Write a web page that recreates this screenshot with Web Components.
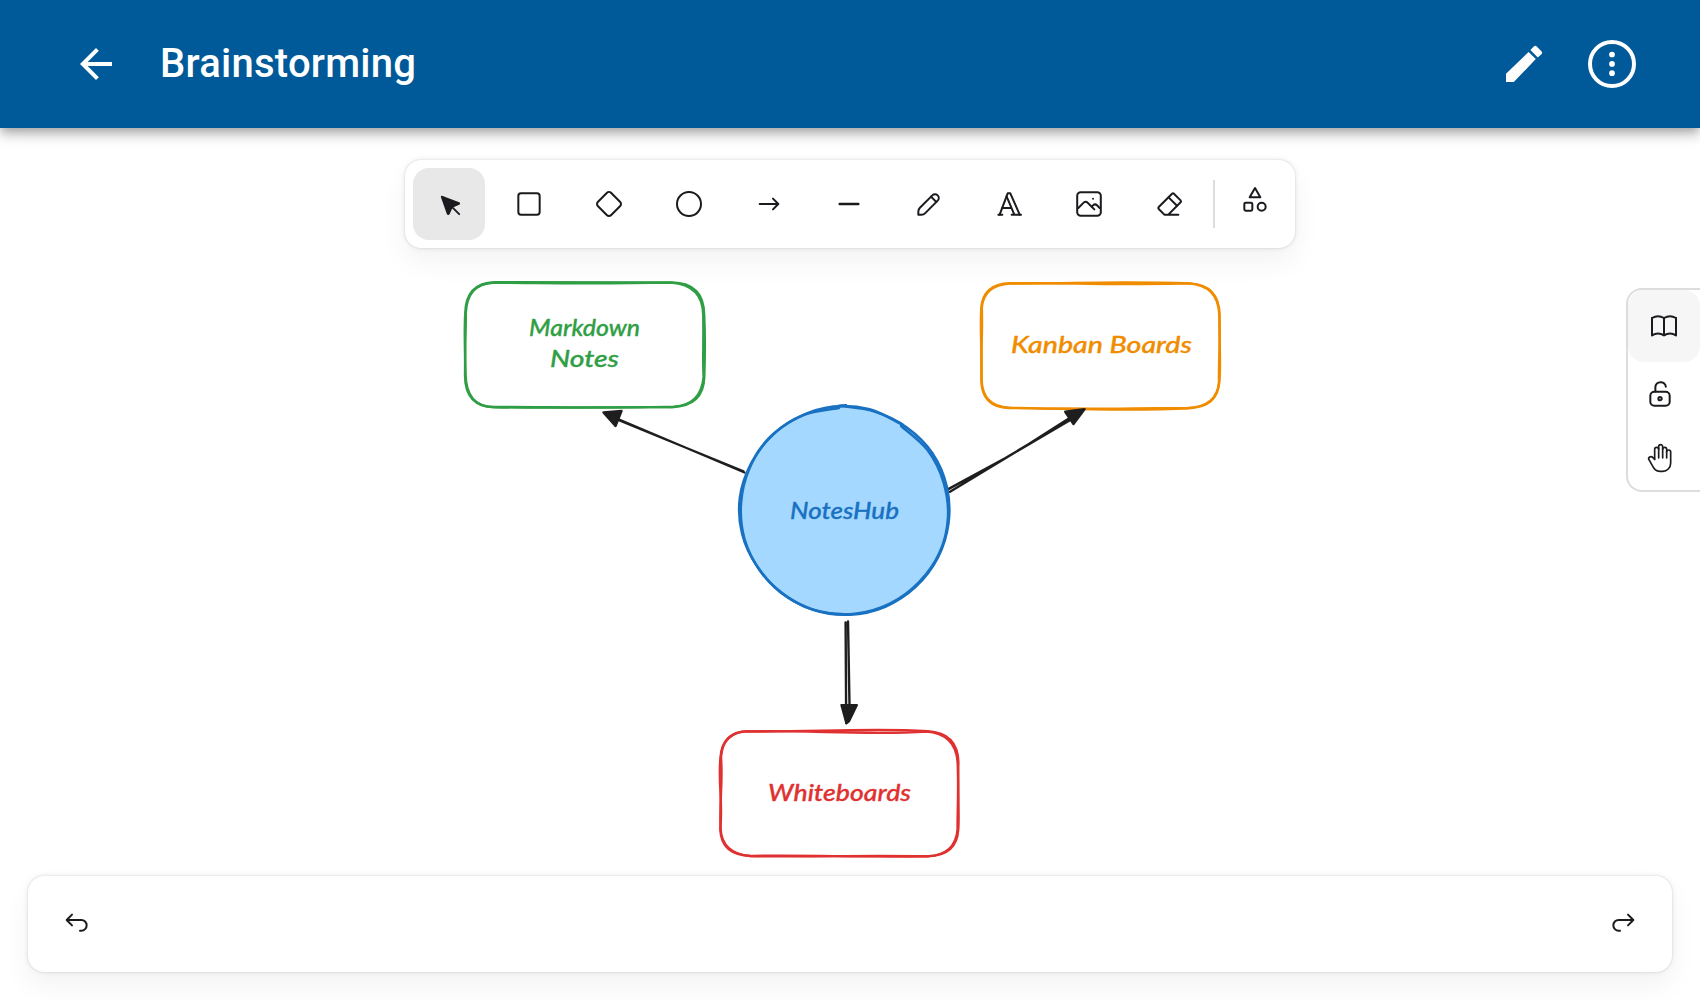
<!DOCTYPE html>
<html lang="en">
<head>
<meta charset="utf-8">
<title>Brainstorming</title>
<style>
html,body{margin:0;height:100%;background:#fff;overflow:hidden;font-family:Roboto,sans-serif;color:#1b1b1f}
</style>
</head>
<body>
<whiteboard-app></whiteboard-app>
<script>
const TABLER = (w, body) => ({ box: 24, w, body });
const SMALL = (w, body) => ({ box: 20, w, body });
const ICONS = {
  select: { box: 22, w: 1.25, body: '<path fill="currentColor" d="M6 6l4.153 11.793a.365.365 0 0 0 .331.207a.366.366 0 0 0 .332-.207l2.184-4.793l4.787-1.994a.355.355 0 0 0 .213-.323a.355.355 0 0 0-.213-.323l-11.787-4.36z"/><path d="M13.5 13.5l4.5 4.5"/>' },
  rectangle: TABLER(1.5, '<rect x="4" y="4" width="16" height="16" rx="2"/>'),
  diamond: TABLER(1.5, '<path d="M10.5 20.4l-6.9-6.9c-.781-.781-.781-2.219 0-3l6.9-6.9c.781-.781 2.219-.781 3 0l6.9 6.9c.781.781.781 2.219 0 3l-6.9 6.9c-.781.781-2.219.781-3 0z"/>'),
  ellipse: TABLER(1.5, '<circle cx="12" cy="12" r="9"/>'),
  arrow: TABLER(1.5, '<path d="M5 12h14M15 16l4-4M15 8l4 4"/>'),
  line: SMALL(1.5, '<path d="M4.167 10h11.666"/>'),
  draw: SMALL(1.25, '<path d="m7.643 15.69 7.774-7.773a2.357 2.357 0 1 0-3.334-3.334L4.31 12.357a3.333 3.333 0 0 0-.977 2.357v1.953h1.953c.884 0 1.732-.352 2.357-.977Z"/><path d="m11.25 5.417 3.333 3.333"/>'),
  text: TABLER(1.5, '<path d="M4 20h3M14 20h7M6.9 15h6.9M10.2 6.3 16 20"/><path d="M5 20 11 4h2l7 16"/>'),
  image: SMALL(1.25, '<path d="M12.5 6.667h.01"/><path d="M4.91 2.625h10.18a2.284 2.284 0 0 1 2.285 2.284v10.182a2.284 2.284 0 0 1-2.284 2.284H4.909a2.284 2.284 0 0 1-2.284-2.284V4.909a2.284 2.284 0 0 1 2.284-2.284Z"/><path d="m3.333 12.5 3.334-3.333c.773-.745 1.726-.745 2.5 0l4.166 4.166"/><path d="m11.667 11.667.833-.834c.774-.744 1.726-.744 2.5 0l1.667 1.667"/>'),
  eraser: TABLER(1.5, '<path d="M19 20h-10.5l-4.21-4.3a1 1 0 0 1 0-1.41l10-10a1 1 0 0 1 1.41 0l5 5a1 1 0 0 1 0 1.41l-9.2 9.3"/><path d="M18 13.3l-6.3-6.3"/>'),
  shapes: TABLER(1.5, '<path d="M12 3l-4 7h8z"/><circle cx="17" cy="17" r="3"/><rect x="4" y="14" width="6" height="6" rx="1"/>'),
  book: TABLER(1.5, '<path d="M3 19a9 9 0 0 1 9 0a9 9 0 0 1 9 0"/><path d="M3 6a9 9 0 0 1 9 0a9 9 0 0 1 9 0"/><path d="M3 6v13M12 6v13M21 6v13"/>'),
  unlock: SMALL(1.25, '<path d="M13.542 8.542H6.458a2.5 2.5 0 0 0-2.5 2.5v3.75a2.5 2.5 0 0 0 2.5 2.5h7.084a2.5 2.5 0 0 0 2.5-2.5v-3.75a2.5 2.5 0 0 0-2.5-2.5Z"/><path d="M10 13.958a1.042 1.042 0 1 0 0-2.083 1.042 1.042 0 0 0 0 2.083Z"/><path d="M7.1 8.4V5.6a3.3 3.3 0 0 1 6.55-.2"/>'),
  hand: TABLER(1.25, '<path d="M8 13v-7.5a1.5 1.5 0 0 1 3 0v6.5"/><path d="M11 5.5v-2a1.5 1.5 0 1 1 3 0v8.5"/><path d="M14 5.5a1.5 1.5 0 0 1 3 0v6.5"/><path d="M17 7.5a1.5 1.5 0 0 1 3 0v8.5a6 6 0 0 1-6 6h-2h.208a6 6 0 0 1-5.012-2.7a69.74 69.74 0 0 1-.196-.3c-.312-.479-1.407-2.388-3.286-5.728a1.5 1.5 0 0 1 .536-2.022a1.867 1.867 0 0 1 2.28.28l1.47 1.47"/>'),
  undo: SMALL(1.25, '<path d="M7.5 10.833 4.167 7.5 7.5 4.167M4.167 7.5h9.166a3.333 3.333 0 0 1 0 6.667H12.5"/>'),
  redo: SMALL(1.25, '<path d="M12.5 10.833 15.833 7.5 12.5 4.167M15.833 7.5H6.667a3.333 3.333 0 0 0 0 6.667H7.5"/>'),
  back: { box: 24, w: 0, body: '<path stroke="none" fill="currentColor" d="M20 11H7.83l5.59-5.59L12 4l-8 8 8 8 1.41-1.41L7.83 13H20v-2z"/>' },
  edit: { box: 48, w: 0, body: '<path stroke="none" fill="currentColor" d="M6 42v-8.2L28.6 11.9l7.2 7.2L13.8 42zM30.4 10l3.4-3.4a2.1 2.1 0 0 1 3 0l4.6 4.6a2.1 2.1 0 0 1 0 3L37.8 17.4z"/>' },
  more: { box: 48, w: 4, body: '<circle cx="24" cy="24" r="22"/><g stroke="none" fill="currentColor"><circle cx="24" cy="14.5" r="2.85"/><circle cx="24" cy="23.9" r="2.85"/><circle cx="24" cy="33.2" r="2.85"/></g>' }
};

class AppIcon extends HTMLElement {
  connectedCallback() {
    const i = ICONS[this.getAttribute('name')];
    this.attachShadow({ mode: 'open' }).innerHTML = `
      <style>:host{display:block;flex:none;width:var(--icon-size,32px);height:var(--icon-size,32px)}svg{display:block;width:100%;height:100%}</style>
      <svg viewBox="0 0 ${i.box} ${i.box}" fill="none" stroke="currentColor" stroke-width="${i.w}" stroke-linecap="round" stroke-linejoin="round">${i.body}</svg>`;
  }
}

class AppHeader extends HTMLElement {
  connectedCallback() {
    this.attachShadow({ mode: 'open' }).innerHTML = `
      <style>
      :host{display:flex;flex:none;align-items:center;height:128px;box-sizing:border-box;padding:0 64px 0 72px;background:#005999;color:#fff;
        --icon-size:48px;position:relative;z-index:3;box-shadow:0 4px 8px -2px rgba(0,0,0,.2),0 8px 10px rgba(0,0,0,.14),0 2px 20px rgba(0,0,0,.12)}
      h1{margin:0 0 0 40px;flex:1;font:500 40px/60px Roboto,sans-serif;letter-spacing:.25px}
      .actions{display:flex;gap:40px}
      </style>
      <app-icon name="back"></app-icon><h1><slot></slot></h1>
      <div class="actions"><app-icon name="edit"></app-icon><app-icon name="more"></app-icon></div>`;
  }
}

class ToolButton extends HTMLElement {
  connectedCallback() {
    this.attachShadow({ mode: 'open' }).innerHTML = `
      <style>
      :host{display:flex;flex:none;width:72px;height:72px;align-items:center;justify-content:center;border-radius:16px}
      :host([active]){background:#e8e8e8}
      :host([soft]){background:#f6f6f6}
      </style><app-icon name="${this.getAttribute('icon')}"></app-icon>`;
  }
}

const ISLAND = 'background:#fff;border-radius:16px;box-shadow:0 0 1.9px rgba(0,0,0,.17),0 0 6.3px rgba(0,0,0,.08),0 14px 28px rgba(0,0,0,.05)';

class ToolBar extends HTMLElement {
  connectedCallback() {
    const tools = ['rectangle', 'diamond', 'ellipse', 'arrow', 'line', 'draw', 'text', 'image', 'eraser'];
    this.attachShadow({ mode: 'open' }).innerHTML = `
      <style>
      :host{display:flex;align-items:center;gap:8px;box-sizing:border-box;width:890px;height:88px;padding:8px;${ISLAND}}
      .rule{width:2px;height:48px;background:#ddd}
      .extra{display:flex;padding:0 0 8px 16px}
      </style>
      <tool-button icon="select" active></tool-button>${tools.map(t => `<tool-button icon="${t}"></tool-button>`).join('')}
      <div class="rule"></div><div class="extra"><app-icon name="shapes"></app-icon></div>`;
  }
}

class SidePanel extends HTMLElement {
  connectedCallback() {
    this.attachShadow({ mode: 'open' }).innerHTML = `
      <style>
      :host{display:flex;flex-direction:column;box-sizing:border-box;width:74px;height:204px;border:2px solid #ddd;border-right:0;border-radius:16px 0 0 16px;background:#fff}
      .row{display:flex;padding:16px 16px 0}
      .row + .row{padding-top:32px}
      </style>
      <tool-button icon="book" soft></tool-button>
      <div class="row"><app-icon name="unlock"></app-icon></div>
      <div class="row"><app-icon name="hand"></app-icon></div>`;
  }
}

class HistoryBar extends HTMLElement {
  connectedCallback() {
    this.attachShadow({ mode: 'open' }).innerHTML = `
      <style>:host{display:flex;align-items:center;justify-content:space-between;box-sizing:border-box;height:96px;padding:0 32px;${ISLAND}}</style>
      <app-icon name="undo"></app-icon><app-icon name="redo"></app-icon>`;
  }
}

/* Smooth Catmull-Rom curve through a list of points. */
function curve(p) {
  let d = `M${p[0][0]} ${p[0][1]}`;
  for (let i = 0; i < p.length - 1; i++) {
    const a = p[i - 1] || p[i], b = p[i], c = p[i + 1], e = p[i + 2] || c;
    d += `C${b[0] + (c[0] - a[0]) / 6} ${b[1] + (c[1] - a[1]) / 6} ${c[0] - (e[0] - b[0]) / 6} ${c[1] - (e[1] - b[1]) / 6} ${c[0]} ${c[1]}`;
  }
  return d;
}

/* Hand-drawn ring: one radius per 20 degree step, starting at angle `from`. */
function ring(from, radii) {
  return curve(radii.map((r, i) => {
    const t = (from + i * 20) * Math.PI / 180;
    return [+(844.3 + r * Math.cos(t)).toFixed(1), +(510.4 + r * Math.sin(t)).toFixed(1)];
  }));
}

class MindMap extends HTMLElement {
  connectedCallback() {
    const outer = ring(-93, [104.8, 103.4, 103.8, 105, 105.2, 105, 104.8, 104.6, 104.6, 104.4, 104.2, 103.6, 103.6, 104.8, 105.2, 104.4, 104.2, 103.8, 102.6]);
    const inner = ring(-56, [101.8, 102.8, 103.2, 104, 104.2, 103.6, 103.8, 104, 104, 103.8, 103.6, 103.8, 103.6, 103.8, 104.2, 103.8, 104.4, 104.2, 103.6]);
    this.attachShadow({ mode: 'open' }).innerHTML = `
      <style>
      :host{display:block;width:1700px;height:872px}
      svg{display:block}
      text{font:italic 500 23.5px Lato,"Open Sans",sans-serif;stroke-width:.35px}
      .g{stroke:#2f9e44}.g text{fill:#2f9e44}
      .o{stroke:#f08c00}.o text{fill:#f08c00}
      .r{stroke:#e03131}.r text{fill:#e03131}
      .b{stroke:#1971c2}.b text{fill:#1971c2}
      .k{stroke:#1e1e1e}
      </style>
      <svg width="1700" height="872" viewBox="0 128 1700 872" fill="none" stroke-width="2.4" stroke-linecap="round" stroke-linejoin="round">
        <g class="g">
          <path d="M495 282.2C555 281.9 615 282 672 282.4Q704 283 704.2 315C705.2 335 705 355 704.3 377Q703.5 406 672 407.2C610 406.5 560 408.6 495 407.2Q465 407 465 375C465.5 350 464 335 465.2 314Q465.5 283 495 282.2"/>
          <path d="M493 282.8C550 283 590 284 671 282.6Q703 285 703.2 315C703.8 340 702.6 360 703.6 377Q701 405 674 406.6C615 408.4 555 407 492 407Q466.5 406 465.6 375C464.4 350 466 335 465.8 313Q467 284 493 282.8"/>
          <text x="529" y="335.5" textLength="111" lengthAdjust="spacingAndGlyphs">Markdown</text>
          <text x="550" y="367" textLength="69" lengthAdjust="spacingAndGlyphs">Notes</text>
        </g>
        <g class="o">
          <path d="M1010 283.2C1065 284 1110 281 1190 283.4Q1219 285 1219.6 315C1219 340 1221 365 1219.4 381Q1218 407 1189 408.2C1130 411.3 1070 408.6 1009 408Q981.5 407 981.4 380C982.4 355 980 335 981.2 309Q982.5 284 1010 283.2"/>
          <path d="M1010 283.6C1065 282.5 1130 285.2 1189 283.4Q1218 285.6 1219.2 314C1220.8 340 1218.4 365 1219 382Q1217 406.6 1188 408C1130 408 1070 410 1009 407.6Q982.5 406.6 981.6 380C980.4 355 982.8 335 981.8 308Q983.5 285 1010 283.6"/>
          <text x="1011" y="352.5" textLength="181" lengthAdjust="spacingAndGlyphs">Kanban Boards</text>
        </g>
        <g class="r">
          <path d="M748 731.3C805 732.5 870 727.5 928 731.2Q957.5 733 958.4 762C957.5 790 959.4 815 958.3 829Q957 855.6 928 856.2C865 857.4 805 854.8 751 856Q721 855 720.3 829C723 800 718 785 720.4 758Q722 732 748 731.3"/>
          <path d="M746 731.4C805 729.8 870 735.5 926 731.6Q955.5 733.5 957.6 762C959 790 957.2 815 957.6 829Q955.5 855.4 927 856.4C865 854.8 805 857.4 750 856Q722 853.5 720.6 829C719.2 800 723 785 721 757Q723 732.5 746 731.4"/>
          <text x="768" y="800.5" textLength="143" lengthAdjust="spacingAndGlyphs">Whiteboards</text>
        </g>
        <g class="k">
          <path stroke-width="2.2" d="M744.5 472.6L612 416.5M743.5 471.2L678 444.5L617 419.5"/>
          <path fill="#1e1e1e" d="M603.5 412.4L621.5 411L615.5 426Z"/>
          <path d="M947.8 489.4L1005 458.3L1072 419M950 491.8L1028 444.5L1072 416.5"/>
          <path fill="#1e1e1e" d="M1065.2 411.8L1084.5 409.3L1073.5 424Z"/>
          <path d="M845.6 622.5L846.2 723M848 621.5L849.6 710"/>
          <path fill="#1e1e1e" stroke-width="2" d="M841.3 705L857 705L849 721.5L846.3 723.5Z"/>
        </g>
        <g class="b">
          <g stroke-width="2.6"><path fill="#a5d8ff" d="${outer}"/><path d="${inner}"/><path d="M837 407.5L841 405.6L846 405.3M901.5 424.5L903 427.5"/></g>
          <text x="790" y="518.5" textLength="109" lengthAdjust="spacingAndGlyphs">NotesHub</text>
        </g>
      </svg>`;
  }
}

class WhiteboardApp extends HTMLElement {
  connectedCallback() {
    this.attachShadow({ mode: 'open' }).innerHTML = `
      <style>
      :host{display:flex;flex-direction:column;height:1000px}
      main{flex:1;position:relative;display:flex;flex-direction:column;align-items:center;justify-content:space-between;box-sizing:border-box;padding:32px 28px 28px}
      mind-map{position:absolute;inset:0}
      side-panel{position:absolute;right:0;top:160px}
      tool-bar,history-bar{position:relative}
      history-bar{width:100%}
      </style>
      <app-header>Brainstorming</app-header>
      <main><mind-map></mind-map><tool-bar></tool-bar><side-panel></side-panel><history-bar></history-bar></main>`;
  }
}

customElements.define('app-icon', AppIcon);
customElements.define('app-header', AppHeader);
customElements.define('tool-button', ToolButton);
customElements.define('tool-bar', ToolBar);
customElements.define('side-panel', SidePanel);
customElements.define('history-bar', HistoryBar);
customElements.define('mind-map', MindMap);
customElements.define('whiteboard-app', WhiteboardApp);
</script>
</body>
</html>
